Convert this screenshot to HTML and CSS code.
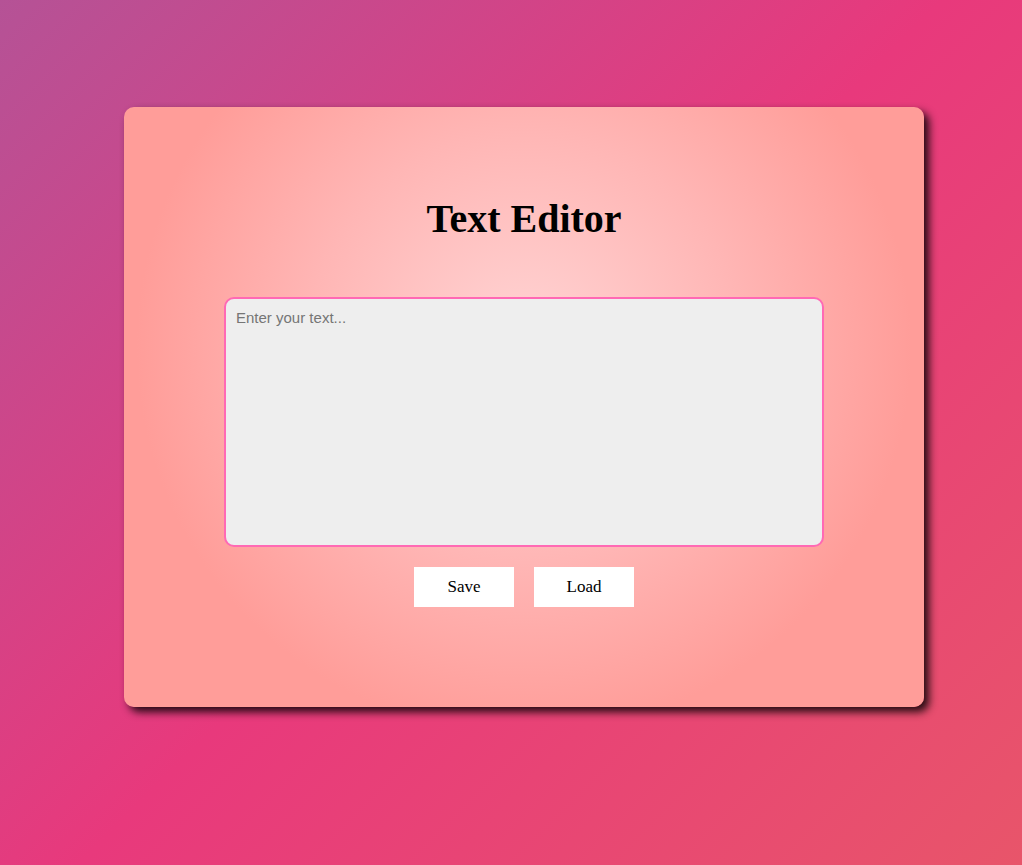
FILE: index.html
```html
<!DOCTYPE html>
<html lang="en">
<head>
<meta charset="utf-8">
<title>Text Editor</title>
<link rel="stylesheet" href="styles.css">
</head>
<body>
<main class="page">
  <section class="card">
    <h1 class="title">Text Editor</h1>
    <textarea class="editor" placeholder="Enter your text..." autofocus></textarea>
    <div class="actions">
      <button class="btn" type="button">Save</button>
      <button class="btn" type="button">Load</button>
    </div>
  </section>
</main>
</body>
</html>
```

FILE: styles.css
```css
html, body {
  margin: 0;
  padding: 0;
}

body {
  min-height: 865px;
  background: linear-gradient(135deg, #b55296 0%, #e8397c 50%, #e8556a 100%);
  font-family: "Liberation Serif", "Times New Roman", serif;
}

.page {
  padding-top: 107px;
  padding-left: 124px;
}

.card {
  box-sizing: border-box;
  width: 800px;
  height: 600px;
  padding-top: 89px;
  border-radius: 10px;
  background: radial-gradient(circle at 50% 40%, #ffd4d4 0%, #ffb6b5 40%, #ff9d99 72%);
  box-shadow: 5px 5px 8px rgba(0, 0, 0, 0.85);
  display: flex;
  flex-direction: column;
  align-items: center;
}

.title {
  margin: 0;
  font-family: "Liberation Serif", "Times New Roman", serif;
  font-size: 40px;
  line-height: 46px;
  font-weight: bold;
  color: #000;
}

.editor {
  display: block;
  box-sizing: border-box;
  width: 600px;
  height: 250px;
  margin-top: 55px;
  padding: 10px;
  border: 2px solid #ff69b4;
  border-radius: 10px;
  background: #eeeeee;
  font-family: "Liberation Sans", Arial, sans-serif;
  font-size: 15px;
  line-height: 18px;
  color: #000;
  resize: none;
  outline: none;
}

.editor::placeholder {
  color: #757575;
}

.actions {
  display: flex;
  gap: 20px;
  margin-top: 20px;
}

.btn {
  width: 100px;
  height: 40px;
  border: none;
  border-radius: 0;
  background: #fff;
  font-family: "Liberation Serif", "Times New Roman", serif;
  font-size: 17px;
  color: #000;
  padding: 0;
}
```
